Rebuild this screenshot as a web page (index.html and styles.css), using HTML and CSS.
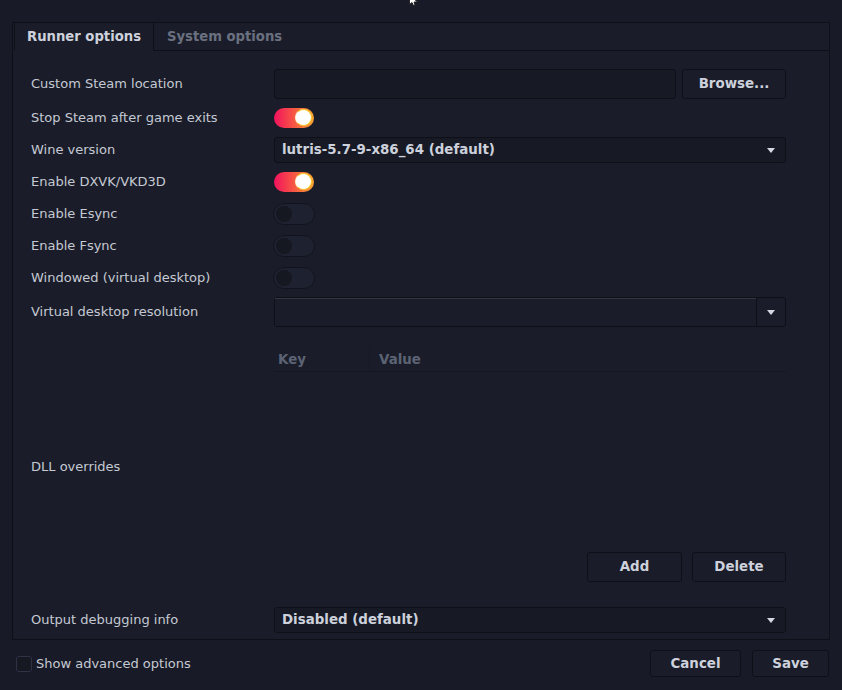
FILE: index.html
```html
<html>
    <head>
        <title>Configure game</title>
        <link rel="stylesheet" href="styles.css">
    </head>
    <body>
        <svg class="cursor" width="12" height="8" viewBox="0 0 12 8">
            <path d="M1.5 0 L1.5 6.5 L4 4.5 L5.5 7.5 L7 7 L6 4 L9.5 4 L5 0 Z" fill="#ffffff" stroke="#1a1a1a" stroke-width="0.9"/>
        </svg>
        <div class="window">
            <div class="notebook">
                <div class="tabs">
                    <div class="tab active">Runner options</div>
                    <div class="tab">System options</div>
                    <div class="tab-fill"></div>
                </div>
                <div class="page">
                    <div class="row row-tall">
                        <div class="label">Custom Steam location</div>
                        <div class="control file-chooser">
                            <div class="entry"></div>
                            <div class="button browse">Browse...</div>
                        </div>
                    </div>
                    <div class="row">
                        <div class="label">Stop Steam after game exits</div>
                        <div class="control"><div class="switch on"><div class="knob"></div></div></div>
                    </div>
                    <div class="row">
                        <div class="label">Wine version</div>
                        <div class="control"><div class="combo"><span>lutris-5.7-9-x86_64 (default)</span><span class="arrow"></span></div></div>
                    </div>
                    <div class="row">
                        <div class="label">Enable DXVK/VKD3D</div>
                        <div class="control"><div class="switch on"><div class="knob"></div></div></div>
                    </div>
                    <div class="row">
                        <div class="label">Enable Esync</div>
                        <div class="control"><div class="switch"><div class="knob"></div></div></div>
                    </div>
                    <div class="row">
                        <div class="label">Enable Fsync</div>
                        <div class="control"><div class="switch"><div class="knob"></div></div></div>
                    </div>
                    <div class="row">
                        <div class="label">Windowed (virtual desktop)</div>
                        <div class="control"><div class="switch"><div class="knob"></div></div></div>
                    </div>
                    <div class="row row-tall">
                        <div class="label">Virtual desktop resolution</div>
                        <div class="control">
                            <div class="combo-entry">
                                <div class="combo-text"></div>
                                <div class="combo-btn"><span class="arrow"></span></div>
                            </div>
                        </div>
                    </div>
                    <div class="row row-dll">
                        <div class="label">DLL overrides</div>
                        <div class="control dll">
                            <div class="dll-head">
                                <div class="col-key">Key</div>
                                <div class="col-value">Value</div>
                            </div>
                            <div class="dll-list"></div>
                            <div class="dll-buttons">
                                <div class="button add">Add</div>
                                <div class="button delete">Delete</div>
                            </div>
                        </div>
                    </div>
                    <div class="row">
                        <div class="label">Output debugging info</div>
                        <div class="control"><div class="combo"><span>Disabled (default)</span><span class="arrow"></span></div></div>
                    </div>
                </div>
            </div>
            <div class="footer">
                <div class="check"><span class="box"></span>Show advanced options</div>
                <div class="actions">
                    <div class="button cancel">Cancel</div>
                    <div class="button save">Save</div>
                </div>
            </div>
        </div>
    </body>
</html>
```

FILE: styles.css
```css
body {
    margin: 0;
    background: #181b27;
    font-family: "DejaVu Sans", "Noto Sans", sans-serif;
    font-size: 13px;
    color: #c5c9d3;
    width: 842px;
    height: 690px;
    overflow: hidden;
}
.cursor {
    position: absolute;
    left: 408px;
    top: -2px;
}
.window {
    padding: 22px 12px 0 12px;
}
/* notebook frame */
.notebook {
    border: 1px solid #0e1018;
    background: #1a1d29;
}
.tabs {
    display: flex;
    height: 28px;
}
.tab {
    font-weight: bold;
    font-size: 13.2px;
    color: #6a7080;
    padding: 1px 13px 0 13px;
    line-height: 26px;
    border-bottom: 1px solid #0e1018;
}
.tab.active {
    color: #cdd1dc;
    margin-left: 1px;
    padding: 1px 12px 0 12px;
    border-left: 1px solid #0e1018;
    border-right: 1px solid #0e1018;
    border-bottom: 1px solid transparent;
}
.tab-fill {
    flex: 1;
    border-bottom: 1px solid #0e1018;
}
.page {
    padding: 18px 43px 6px 18px;
    display: flex;
    flex-direction: column;
    gap: 6px;
}
.row {
    display: flex;
    align-items: center;
    height: 26px;
}
.row-tall {
    height: 30px;
}
.label {
    width: 243px;
    flex-shrink: 0;
    margin-top: -2px;
}
.control {
    flex: 1;
    display: flex;
    align-items: center;
}
.file-chooser {
    gap: 6px;
    height: 30px;
}
.entry {
    flex: 1;
    height: 28px;
    background: #171a25;
    border: 1px solid #0e1018;
    border-radius: 3px;
}
.button {
    box-sizing: border-box;
    height: 30px;
    display: flex;
    align-items: center;
    justify-content: center;
    padding-bottom: 1px;
    background: #1a1d29;
    border: 1px solid #0e1018;
    border-radius: 3px;
    font-weight: bold;
    font-size: 13.4px;
    color: #cdd1dc;
}
.browse {
    width: 104px;
}
/* switches */
.switch {
    box-sizing: border-box;
    width: 42px;
    height: 22px;
    border-radius: 11px;
    background: #1e2130;
    border: 1px solid #12141d;
    position: relative;
    margin-left: -1px;
}
.switch .knob {
    position: absolute;
    left: 2px;
    top: 2px;
    width: 16px;
    height: 16px;
    border-radius: 50%;
    background: #151821;
}
.switch.on {
    width: 40px;
    height: 20px;
    margin-left: 0;
    border: none;
    background: linear-gradient(to right, #f2125e, #f7653f 60%, #f8a531);
}
.switch.on .knob {
    left: 21px;
    top: 1px;
    width: 15px;
    height: 15px;
    background: #ffffff;
    border: 1px solid #f6c92a;
    border-left-color: #fff4d0;
}
/* combos */
.combo {
    flex: 1;
    box-sizing: border-box;
    height: 26px;
    display: flex;
    align-items: center;
    justify-content: space-between;
    padding: 0 10px 1px 7px;
    background: #171a25;
    border: 1px solid #0e1018;
    border-radius: 3px;
    font-weight: bold;
    font-size: 13.4px;
    color: #cdd1dc;
}
.combo .arrow {
    margin-top: 1px;
}
.arrow {
    width: 0;
    height: 0;
    border-left: 4px solid transparent;
    border-right: 4px solid transparent;
    border-top: 5px solid #d5d8e0;
}
.combo-entry {
    flex: 1;
    box-sizing: border-box;
    height: 30px;
    display: flex;
    border: 1px solid #0e1018;
    border-radius: 3px;
    background: #1a1d29;
}
.combo-text {
    flex: 1;
    background: #1a1d29;
    border-top: 1px solid #33363f;
}
.combo-btn {
    width: 28px;
    border-left: 1px solid #0e1018;
    display: flex;
    align-items: center;
    justify-content: center;
}
/* dll overrides */
.row-dll {
    height: 268px;
}
.dll {
    align-self: stretch;
    flex-direction: column;
    align-items: stretch;
    padding: 12px 0 19px 0;
}
.dll-head {
    display: flex;
    height: 26px;
    border-bottom: 1px solid #151822;
    font-weight: bold;
    font-size: 13.4px;
    color: #5c6374;
}
.col-key {
    width: 91px;
    padding-left: 4px;
    border-right: 1px solid #171a24;
    padding-top: 4px;
    line-height: 22px;
}
.col-value {
    padding-left: 9px;
    padding-top: 4px;
    line-height: 22px;
}
.dll-list {
    flex: 1;
}
.dll-buttons {
    display: flex;
    justify-content: flex-end;
    gap: 10px;
}
.add {
    width: 95px;
}
.delete {
    width: 94px;
}
/* footer */
.footer {
    display: flex;
    align-items: center;
    justify-content: space-between;
    padding: 10px 1px 0 4px;
}
.check {
    display: flex;
    align-items: center;
    gap: 4px;
    font-size: 13px;
}
.box {
    box-sizing: border-box;
    width: 16px;
    height: 16px;
    border: 1px solid #2e3242;
    border-radius: 3px;
    background: #161822;
}
.actions {
    display: flex;
    gap: 11px;
}
.actions .button {
    height: 27px;
}
.cancel {
    width: 91px;
}
.save {
    width: 77px;
}
```
